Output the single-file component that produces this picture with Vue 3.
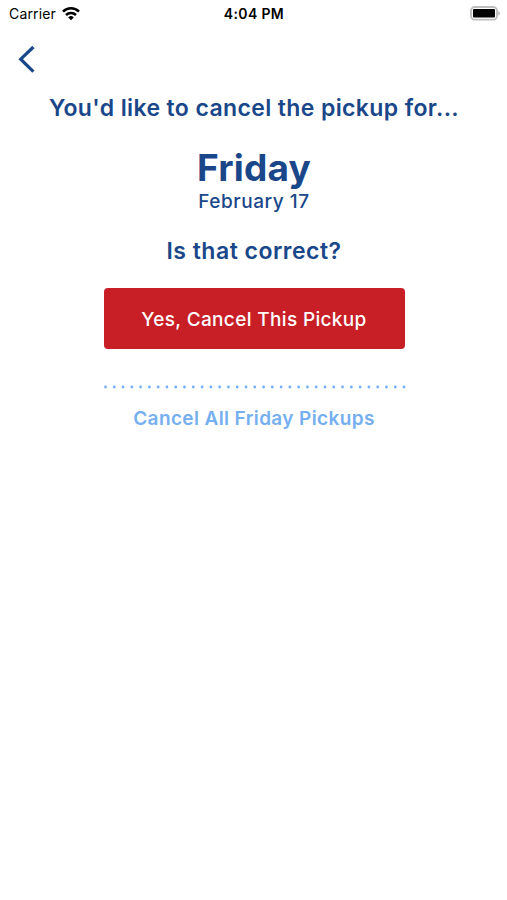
<template>
  <div class="screen">
    <header class="status-bar">
      <div class="carrier">
        <span>Carrier</span>
        <svg width="18" height="14" viewBox="0 0 18 14" fill="none" stroke="#000" stroke-width="2.5">
          <path d="M1 4.6a11.4 11.4 0 0 1 16 0" />
          <path d="M4 8a7.2 7.2 0 0 1 10 0" />
          <path d="M9 13.2 6.2 10.4a4 4 0 0 1 5.6 0z" fill="#000" stroke="none" />
        </svg>
      </div>
      <div class="time">4:04 PM</div>
      <div class="battery">
        <svg width="31" height="15" viewBox="0 0 31 15">
          <rect x="1" y="1" width="26" height="12.6" rx="3.8" fill="none" stroke="#bdbdbd" stroke-width="1.9" />
          <rect x="3" y="3" width="22" height="8.6" rx="1" fill="#000" />
          <path d="M28.2 5c2.4.8 2.4 3.8 0 4.6z" fill="#bdbdbd" />
        </svg>
      </div>
    </header>

    <nav>
      <button class="back" aria-label="Back">
        <svg width="18" height="28" viewBox="0 0 18 28" fill="none" stroke="#1a4789" stroke-width="3.2">
          <path d="M15.4 2 2.7 14.2l12.7 12.4" />
        </svg>
      </button>
    </nav>

    <main>
      <p class="intro">You'd like to cancel the pickup for...</p>
      <h1>{{ pickup.day }}</h1>
      <p class="date">{{ pickup.date }}</p>
      <p class="question">Is that correct?</p>
      <button class="confirm"><span>Yes, Cancel This Pickup</span></button>
      <svg class="dots" width="303" height="4">
        <line x1="2.5" y1="2" x2="301.5" y2="2" />
      </svg>
      <button class="cancel-all"><span>Cancel All {{ pickup.day }} Pickups</span></button>
    </main>
  </div>
</template>

<script setup>
import { ref } from "vue";

const pickup = ref({ day: "Friday", date: "February 17" });
</script>

<style>
body {
  margin: 0;
  background-color: white;
}
</style>

<style scoped>
.screen {
  height: 900px;
  overflow: hidden;
  background-color: white;
  color: #1a4789;
  font-family: Inter, "Liberation Sans", sans-serif;
}

.status-bar {
  display: grid;
  grid-template-columns: 1fr auto 1fr;
  align-items: center;
  height: 27px;
  padding: 0 6px 0 9px;
  color: black;
  font-size: 14px;

  .carrier {
    display: flex;
    align-items: center;
    gap: 6px;
    letter-spacing: 0.15px;
  }

  .time {
    margin-right: 2px;
    font-weight: 600;
    letter-spacing: 0.35px;
  }

  .battery {
    display: flex;
    justify-content: flex-end;
  }
}

nav {
  height: 67px;
  padding: 18px 0 0 18px;
  box-sizing: border-box;
}

button {
  display: block;
  margin: 0;
  padding: 0;
  border: 0;
  background: none;
  font: inherit;
}

.back svg {
  display: block;
}

main {
  display: flex;
  flex-direction: column;
  align-items: center;
  padding-left: 1px;
  font-weight: 600;
  white-space: nowrap;
}

p,
h1 {
  margin: 0;
}

.intro,
.question {
  font-size: 23px;
  line-height: 28px;
  letter-spacing: 0.38px;
}

h1 {
  margin-top: 23px;
  font-size: 37px;
  font-weight: 700;
  line-height: 46px;
  letter-spacing: 0.2px;
}

.date {
  margin-top: -1px;
  font-size: 19px;
  font-weight: 550;
  line-height: 24px;
  letter-spacing: 0.55px;
}

.question {
  margin-top: 23px;
  letter-spacing: 0.5px;
}

.confirm {
  width: 301px;
  height: 61px;
  margin-top: 23px;
  padding-top: 1px;
  border-radius: 4px;
  background-color: #c81e26;
  color: white;
  font-size: 19px;
  font-weight: 500;
  letter-spacing: 0.35px;
}

.dots {
  margin-top: 36px;

  line {
    stroke: #75aff5;
    stroke-width: 2.8;
    stroke-linecap: round;
    stroke-dasharray: 0 8.78;
  }
}

.cancel-all {
  margin-top: 16px;
  color: #75aff0;
  font-size: 19px;
  line-height: 27px;
  letter-spacing: 0.38px;
}
</style>
